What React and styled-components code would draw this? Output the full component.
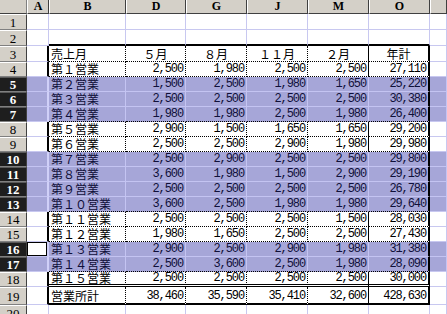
import React from 'react'
import styled, { createGlobalStyle } from 'styled-components'

const GlobalStyle = createGlobalStyle`
  html, body { margin:0; padding:0; background:#fff; }
  body { width:447px; height:314px; overflow:hidden; }
  * { box-sizing:border-box; }
`

const GRID = '#c8c8f0'
const SEL_GRID = '#c4c4f2'
const SEL_BG = '#a6a6d8'
const FACE = '#d4d0c8'

const Sheet = styled.div`
  display:grid;
  grid-template-columns: 27px 22px 77px 60px 61px 61px 61px 61px 1fr;
  grid-template-rows: 14px 16px 16px 16px repeat(15, 15px) 18px 16px;
  width:447px;
  height:314px;
  overflow:hidden;
  background:#fff;
`

const Corner = styled.div`
  background:${FACE};
  border-right:1px solid #808080;
  border-bottom:1px solid #404040;
`

const ColHead = styled.div`
  display:flex;
  align-items:center;
  justify-content:center;
  background:${FACE};
  border-left:1px solid #fff;
  border-right:1px solid #404040;
  border-bottom:1px solid #404040;
  font-family:"Liberation Serif", serif;
  font-weight:bold;
  font-size:12px;
  color:#000;
`

const RowHead = styled.div`
  display:flex;
  align-items:center;
  justify-content:center;
  background:${p => (p.$sel ? '#1e1e1e' : FACE)};
  color:${p => (p.$sel ? '#fff' : '#000')};
  border-top:1px solid ${p => (p.$sel ? '#5a5a5a' : '#fff')};
  border-right:1px solid #404040;
  border-bottom:1px solid #808080;
  font-family:"Liberation Serif", serif;
  font-weight:${p => (p.$sel ? 'bold' : 'normal')};
  font-size:13px;
  line-height:13px;
`

const Cell = styled.div`
  display:flex;
  align-items:${p => (p.$bottom ? 'flex-end' : 'center')};
  justify-content:${p => p.$align};
  padding:0 2px ${p => (p.$bottom ? '1px' : '0')} 2px;
  white-space:nowrap;
  background:${p => (p.$active ? '#fff' : p.$sel ? SEL_BG : '#fff')};
  box-shadow:${p => (p.$active ? 'inset 0 0 0 1px #000' : 'none')};
  border-right:${p => p.$br};
  border-bottom:${p => p.$bb};
  color:${p => (p.$sel ? '#10103a' : '#000')};
`

const Jp = styled.span`
  display:block;
  height:12px;
  font-family:"Noto Sans CJK JP", "Noto Sans", sans-serif;
  font-size:12px;
  line-height:12px;
`

const Num = styled.span`
  display:block;
  height:12px;
  font-family:"Liberation Mono", monospace;
  font-size:12px;
  line-height:12px;
  letter-spacing:-1.1px;
`

const columns = ['A', 'B', 'D', 'G', 'J', 'M', 'O', '']

const data = [
  ['第１営業', '2,500', '1,980', '2,500', '2,500', '27,110'],
  ['第２営業', '1,500', '2,500', '1,980', '1,650', '25,220'],
  ['第３営業', '2,500', '2,500', '2,500', '2,500', '30,380'],
  ['第４営業', '1,980', '1,980', '2,500', '1,980', '26,400'],
  ['第５営業', '2,900', '1,500', '1,650', '1,650', '29,200'],
  ['第６営業', '2,500', '2,500', '2,900', '1,980', '29,980'],
  ['第７営業', '2,500', '2,900', '2,500', '2,500', '29,800'],
  ['第８営業', '3,600', '1,980', '1,500', '2,900', '29,190'],
  ['第９営業', '2,500', '2,500', '2,500', '2,500', '26,780'],
  ['第１０営業', '3,600', '2,500', '1,980', '1,980', '29,640'],
  ['第１１営業', '2,500', '2,500', '2,500', '1,500', '28,030'],
  ['第１２営業', '1,980', '1,650', '2,500', '2,500', '27,430'],
  ['第１３営業', '2,900', '2,500', '2,900', '1,980', '31,380'],
  ['第１４営業', '2,500', '3,600', '2,500', '1,980', '28,090'],
  ['第１５営業', '2,500', '2,500', '2,500', '2,500', '30,000'],
  ['営業所計', '38,460', '35,590', '35,410', '32,600', '428,630'],
]

const header = ['売上月', '５月', '８月', '１１月', '２月', '年計']

const selected = new Set([5, 6, 7, 10, 11, 12, 13, 16, 17])

const cellContent = (r, c) => {
  if (c < 1 || c > 6) return null
  if (r === 3) return { text: header[c - 1], jp: true, align: c === 1 ? 'flex-start' : 'center' }
  if (r >= 4 && r <= 19) {
    const v = data[r - 4][c - 1]
    return c === 1 ? { text: v, jp: true, align: 'flex-start' } : { text: v, jp: false, align: 'flex-end' }
  }
  return null
}

const borders = (r, c) => {
  const sel = selected.has(r)
  const nextSel = selected.has(r + 1)
  const line = `1px solid ${sel ? SEL_GRID : GRID}`
  let br = line
  let bb = sel && !nextSel ? `1px solid ${GRID}` : line
  const inTable = r >= 3 && r <= 19 && c >= 1 && c <= 6

  if (c === 0 && r >= 3 && r <= 19) br = `2px solid ${sel ? '#d0d0f8' : '#000'}`
  if (r === 2 && c >= 1 && c <= 6) bb = '2px solid #000'

  if (inTable) {
    if (c <= 4) br = sel ? `1px solid ${SEL_GRID}` : '1px dotted #000'
    if (c === 5) br = sel ? `1px solid ${SEL_GRID}` : '1px solid #000'
    if (c === 6) br = '2px solid #000'
    if (r <= 17) bb = sel && nextSel ? `1px solid ${SEL_GRID}` : '1px dotted #000'
    if (r === 18) bb = '3px double #000'
    if (r === 19) bb = '2px solid #000'
  }
  return { br, bb }
}

const App = () => {
  const rows = Array.from({ length: 20 }, (_, i) => i + 1)
  return (
    <>
      <GlobalStyle />
      <Sheet>
        <Corner />
        {columns.map((col, i) => (
          <ColHead key={'h' + i}>{col}</ColHead>
        ))}
        {rows.map(r => (
          <React.Fragment key={r}>
            <RowHead $sel={selected.has(r)}>{r}</RowHead>
            {columns.map((_, c) => {
              const content = cellContent(r, c)
              const { br, bb } = borders(r, c)
              return (
                <Cell
                  key={c}
                  $sel={selected.has(r)}
                  $active={r === 16 && c === 0}
                  $bottom={r === 19}
                  $align={content ? content.align : 'flex-start'}
                  $br={br}
                  $bb={bb}
                >
                  {content && (content.jp ? <Jp>{content.text}</Jp> : <Num>{content.text}</Num>)}
                </Cell>
              )
            })}
          </React.Fragment>
        ))}
      </Sheet>
    </>
  )
}

export default App
